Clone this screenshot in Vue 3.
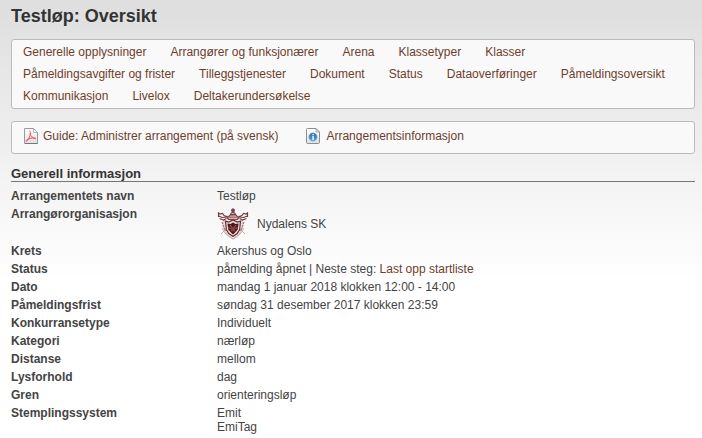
<script setup>
const navLinks = [
  'Generelle opplysninger',
  'Arrangører og funksjonærer',
  'Arena',
  'Klassetyper',
  'Klasser',
  'Påmeldingsavgifter og frister',
  'Tilleggstjenester',
  'Dokument',
  'Status',
  'Dataoverføringer',
  'Påmeldingsoversikt',
  'Kommunikasjon',
  'Livelox',
  'Deltakerundersøkelse',
]

const rows = [
  { label: 'Arrangementets navn', lines: ['Testløp'] },
  { label: 'Arrangørorganisasjon', organisation: 'Nydalens SK' },
  { label: 'Krets', lines: ['Akershus og Oslo'] },
  { label: 'Status', lines: ['påmelding åpnet | Neste steg: '], link: 'Last opp startliste' },
  { label: 'Dato', lines: ['mandag 1 januar 2018 klokken 12:00 - 14:00'] },
  { label: 'Påmeldingsfrist', lines: ['søndag 31 desember 2017 klokken 23:59'] },
  { label: 'Konkurransetype', lines: ['Individuelt'] },
  { label: 'Kategori', lines: ['nærløp'] },
  { label: 'Distanse', lines: ['mellom'] },
  { label: 'Lysforhold', lines: ['dag'] },
  { label: 'Gren', lines: ['orienteringsløp'] },
  { label: 'Stemplingssystem', lines: ['Emit', 'EmiTag'] },
]
</script>

<template>
  <main class="page">
    <h1>Testløp: Oversikt</h1>

    <nav class="panel nav">
      <a v-for="name in navLinks" :key="name" href="#">{{ name }}</a>
    </nav>

    <div class="panel documents">
      <a href="#">
        <svg class="file-icon" viewBox="0 0 16 16" aria-hidden="true">
          <defs>
            <linearGradient id="pdf-paper" x1="0" y1="0" x2="0" y2="1">
              <stop offset="0" stop-color="#fdfdfd" />
              <stop offset="1" stop-color="#dfe1e2" />
            </linearGradient>
          </defs>
          <path d="M1.5 .5h9l4 4v11h-13z" fill="url(#pdf-paper)" stroke="#9a9a9a" />
          <path d="M10.5 .5v4h4z" fill="#fff" stroke="#a2a2a2" stroke-width=".8" />
          <path d="M2 15.5h12.5" stroke="#777" />
          <path d="M6.500 3c1.200 0 1.100 2.700 .5 4.600C6.200 10 4.900 12.600 3.300 13.400M3.300 13.400c-.8-.6.800-2 2.700-2.700 2.400-.8 5.500-1.200 6.800-.4M12.800 10.900C10 10.500 7.600 8 6.900 5.400" fill="none" stroke="#ef5350" stroke-width="1" />
        </svg>
        <span>Guide: Administrer arrangement (på svensk)</span>
      </a>
      <a href="#">
        <svg class="file-icon" viewBox="0 0 16 16" aria-hidden="true">
          <defs>
            <linearGradient id="info-paper" x1="0" y1="0" x2="0" y2="1">
              <stop offset="0" stop-color="#fff" />
              <stop offset="1" stop-color="#dedfdf" />
            </linearGradient>
            <linearGradient id="info-ball" x1="0" y1="0" x2="0" y2="1">
              <stop offset="0" stop-color="#2464ac" />
              <stop offset="1" stop-color="#53a9ec" />
            </linearGradient>
          </defs>
          <path d="M1.500 .5h8.500l3.500 3.500v10.500q0 1-1 1h-11q-1 0-1-1v-13q0-1 1-1z" fill="url(#info-paper)" stroke="#8e8e8e" />
          <path d="M10 .8v3.200h3.300z" fill="#ddd" stroke="#a0a0a0" stroke-width=".8" />
          <circle cx="7" cy="9" r="4.300" fill="url(#info-ball)" stroke="#b5cce2" stroke-width=".6" />
          <path d="M6.400 6h1.400v1.200H6.400zM6.400 8h1.400v4H6.400z" fill="#fff" />
        </svg>
        <span>Arrangementsinformasjon</span>
      </a>
    </div>

    <h2>Generell informasjon</h2>

    <table>
      <tbody>
        <tr v-for="row in rows" :key="row.label">
          <th scope="row">{{ row.label }}</th>
          <td>
            <div v-if="row.organisation" class="organisation">
              <svg class="crest" viewBox="0 0 32 32" aria-hidden="true">
                <g fill="none" stroke="#c9adae" stroke-width="1">
                  <path d="M4 26 11 19M28 26 21 19M5 20q3 7 11 11 8-4 11-11" />
                  <path d="M7 12q-1 10 3 14l6 5 6-5q4-4 3-14" />
                </g>
                <path d="M16 0l2.200 2-.9 2 1.500 1.500L20 8l1 2H11l1-2 1.200-2.500L14.700 4l-.9-2z" fill="#7d4448" />
                <path d="M10 9q6-4 12 0l-1 2.500H11z" fill="#a67a7c" stroke="#6b3034" stroke-width=".8" />
                <path d="M13 8h6M14.500 5.500h3M12 10.500h8" stroke="#e4cfd0" stroke-width=".8" />
                <path d="M8.500 13l3 1 4.500-2 4.500 2 3-1-.8 8.500-2.500 4L16 28.500l-4.200-3-2.500-4z" fill="#e8d7d7" stroke="#6b2a2e" stroke-width="1.200" />
                <path d="M10.500 15.500l3 .5 2.500-1.500 2.500 1.500 3-.5-.8 6L18.500 24 16 26.500 13.500 24l-2.200-2.500z" fill="#551519" />
                <path d="M13 17l2 2.500v4M19 17l-2 2.500v4M11.500 19l2 2M20.500 19l-2 2" fill="none" stroke="#b98f91" stroke-width=".8" />
                <g fill="none" stroke="#7a3b3f" stroke-width="1.200">
                  <path d="M1 4.500l2 1.500 2.500-.5 1.500 2 3 1M1.500 8l4 1.500 5-.5M2.500 10.500l4 1.500 3-1.500M1.500 5v4" />
                  <path d="M31 4.500L29 6l-2.500-.5-1.500 2-3 1M30.500 8l-4 1.500-5-.5M29.500 10.500l-4 1.500-3-1.500M30.500 5v4" />
                </g>
                <path d="M5 14l1.500 5 2 4M27 14l-1.500 5-2 4" fill="none" stroke="#8f595c" stroke-dasharray="2 1" />
              </svg>
              <span>{{ row.organisation }}</span>
            </div>
            <template v-else>
              <template v-for="(line, i) in row.lines" :key="line"><br v-if="i > 0">{{ line }}</template><a v-if="row.link" href="#">{{ row.link }}</a>
            </template>
          </td>
        </tr>
      </tbody>
    </table>
  </main>
</template>

<style>
body {
  background: #fff linear-gradient(#dedede, #fff 280px) no-repeat;
}
</style>

<style scoped>
.page {
  padding: 6px 7px 4px 11px;
  font: 12px/14px "Liberation Sans", Arial, sans-serif;
  color: #444;
}

a {
  color: #6f3d2c;
  text-decoration: none;
}

h1 {
  margin: 0 0 13px;
  font-size: 18px;
  line-height: 20px;
  color: #333;
}

.panel {
  display: flex;
  flex-wrap: wrap;
  column-gap: 24px;
  margin-bottom: 12px;
  padding: 1px 11px;
  border: 1px solid #bbb;
  border-radius: 3px;
  background: #f9f9f9;
}

.nav a {
  line-height: 22px;
}

.documents {
  column-gap: 28px;
}

.documents a {
  display: flex;
  align-items: center;
  gap: 4px;
  line-height: 29px;
}

.documents span {
  margin-bottom: 2px;
  line-height: 27px;
}

.file-icon {
  width: 16px;
  height: 16px;
  margin-bottom: 4px;
}

h2 {
  margin: 0 0 5px;
  border-bottom: 1px solid #777;
  font-size: 13px;
  line-height: 15px;
  color: #333;
}

table {
  width: 100%;
  border-collapse: collapse;
}

th,
td {
  padding: 2px 0;
  text-align: left;
  vertical-align: top;
}

th {
  width: 206px;
}

.organisation {
  display: flex;
  align-items: center;
  gap: 8px;
  min-height: 33px;
}

.crest {
  width: 32px;
  height: 32px;
}
</style>
